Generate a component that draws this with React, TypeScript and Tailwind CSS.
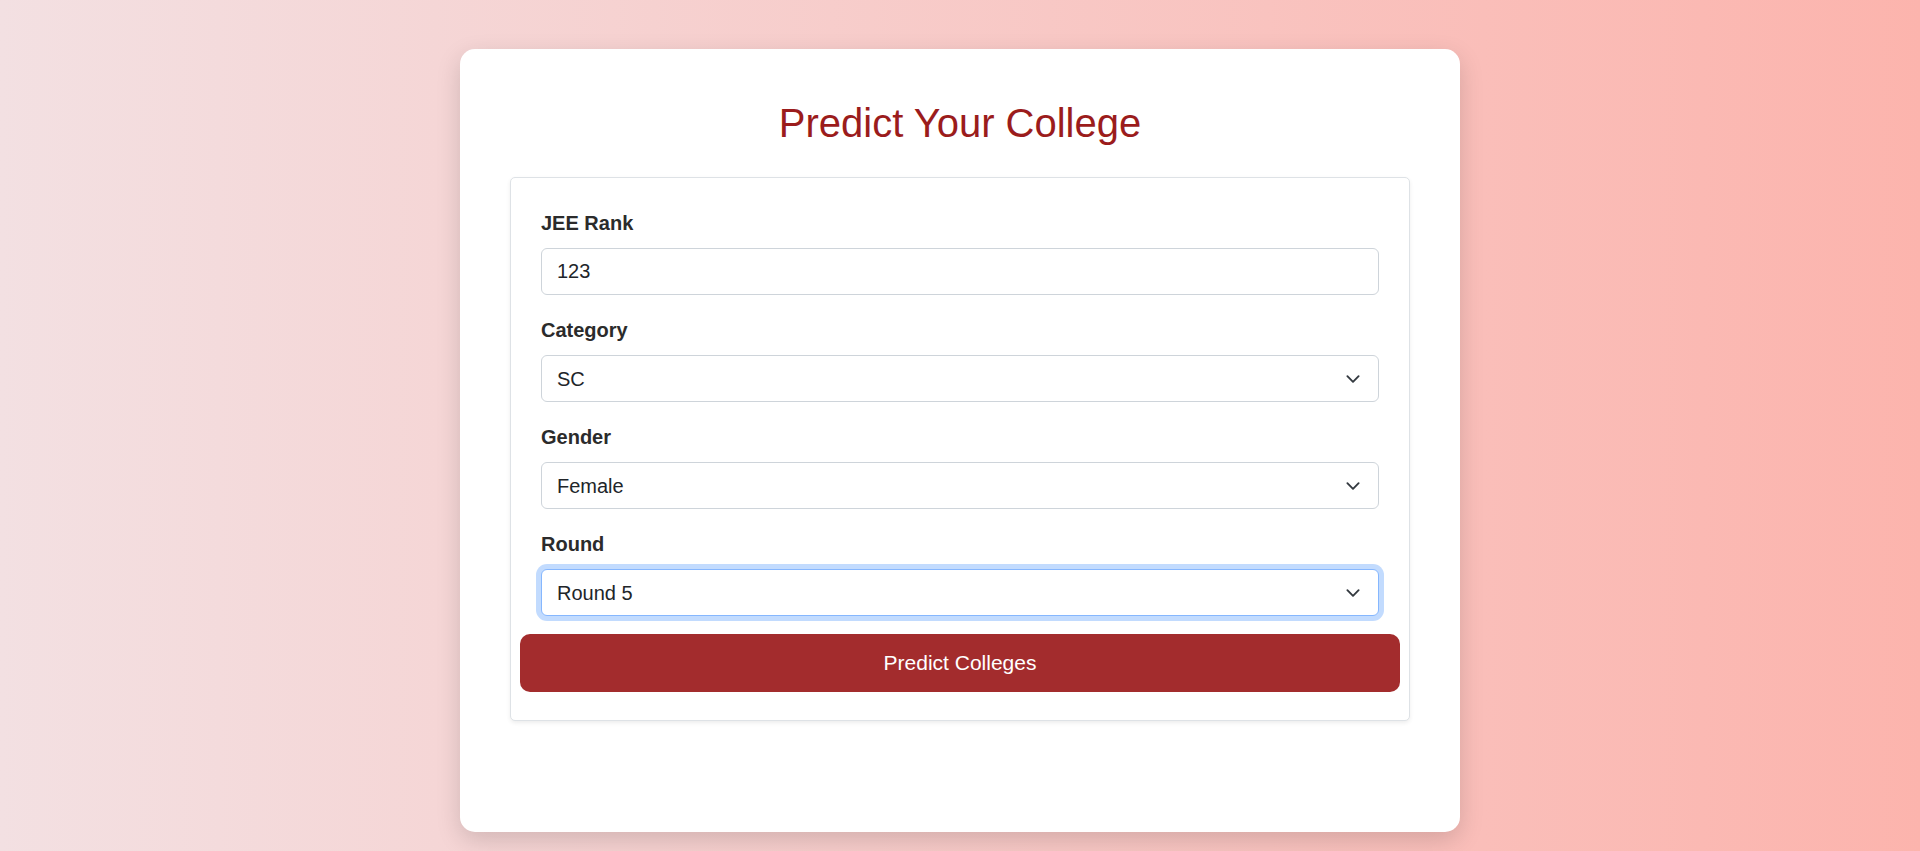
import React from "react";

const Chevron = () => (
  <svg
    className="pointer-events-none absolute right-[16px] top-1/2 -translate-y-1/2"
    width="20"
    height="15"
    viewBox="0 0 16 16"
    fill="none"
  >
    <path d="m2 5 6 6 6-6" stroke="#343a40" strokeWidth="2" strokeLinecap="round" strokeLinejoin="round" />
  </svg>
);

function SelectField({
  label,
  value,
  options,
  focused,
}: {
  label: string;
  value: string;
  options: string[];
  focused?: boolean;
}) {
  return (
    <div className="mb-[20px]">
      <label className="mb-[10px] block text-[20px] font-bold leading-[30px] text-[#2b2b2b]">{label}</label>
      <div className="relative">
        <select
          defaultValue={value}
          className={
            focused
              ? "block h-[47px] w-full appearance-none rounded-[6px] border border-[#86b7fe] bg-white pl-[15px] pr-[50px] text-[20px] text-[#212529] shadow-[0_0_0_5px_rgba(13,110,253,0.25)] outline-none"
              : "block h-[47px] w-full appearance-none rounded-[6px] border border-[#ced4da] bg-white pl-[15px] pr-[50px] text-[20px] text-[#212529] outline-none"
          }
          style={{ fontFamily: '"Liberation Sans", Arial, sans-serif' }}
        >
          {options.map((o) => (
            <option key={o} value={o}>
              {o}
            </option>
          ))}
        </select>
        <Chevron />
      </div>
    </div>
  );
}

export default function App() {
  return (
    <div
      className="min-h-[851px] w-full bg-[linear-gradient(to_right,#f3e0e2,#fcb4ad)] pt-[49px]"
      style={{ fontFamily: '"Liberation Sans", Arial, sans-serif' }}
    >
      <div className="mx-auto w-[1000px] rounded-[15px] bg-white px-[50px] pt-[50px] pb-[111px] shadow-[0_8px_24px_rgba(0,0,0,0.15)]">
        <h1 className="mb-[30px] text-center text-[40px] font-normal leading-[48px] text-[#9b1c1c]">
          Predict Your College
        </h1>
        <div className="rounded-[5px] border border-[#dee2e6] bg-white px-[9px] pt-[30px] pb-[28px] shadow-[0_2px_4px_rgba(0,0,0,0.075)]">
          <div className="px-[21px]">
            <div className="mb-[20px]">
              <label className="mb-[10px] block text-[20px] font-bold leading-[30px] text-[#2b2b2b]">JEE Rank</label>
              <input
                type="text"
                defaultValue="123"
                className="block h-[47px] w-full rounded-[6px] border border-[#ced4da] bg-white pl-[15px] text-[20px] text-[#212529] outline-none"
                style={{ fontFamily: '"Liberation Sans", Arial, sans-serif' }}
              />
            </div>
            <SelectField label="Category" value="SC" options={["General", "OBC", "SC", "ST", "EWS"]} />
            <SelectField label="Gender" value="Female" options={["Male", "Female"]} />
            <div className="-mb-[2px]">
              <SelectField
                label="Round"
                value="Round 5"
                options={["Round 1", "Round 2", "Round 3", "Round 4", "Round 5", "Round 6"]}
                focused
              />
            </div>
          </div>
          <button
            type="button"
            className="flex h-[58px] w-full items-center justify-center rounded-[10px] bg-[#a32c2d] text-[21px] text-white"
          >
            Predict Colleges
          </button>
        </div>
      </div>
    </div>
  );
}
